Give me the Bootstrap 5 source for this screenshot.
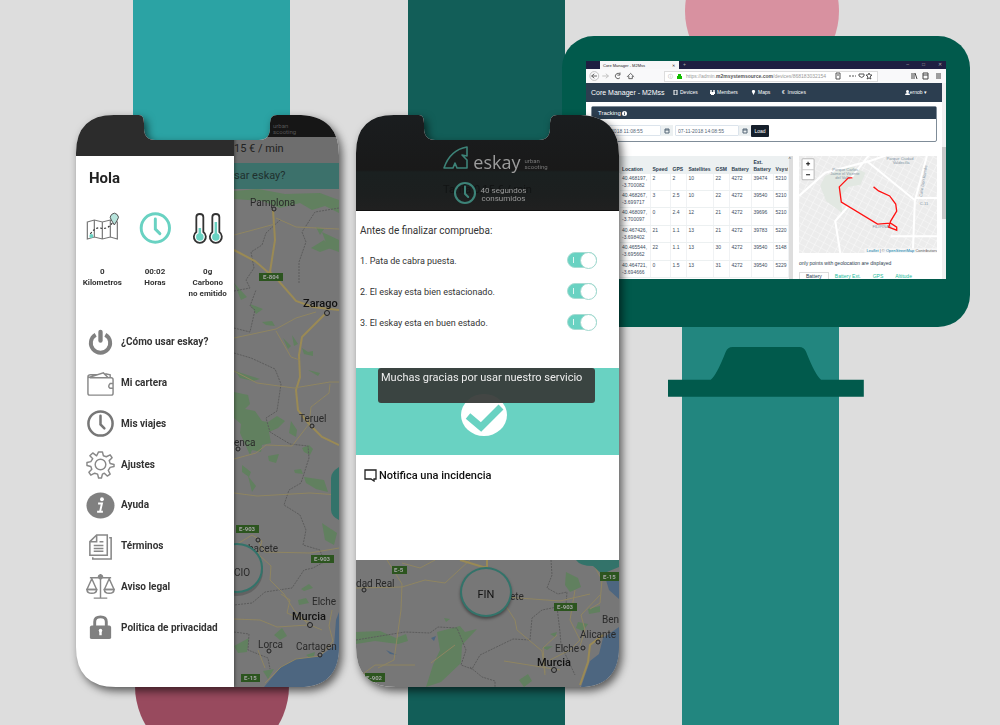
<!DOCTYPE html>
<html lang="es">
<head>
<meta charset="utf-8">
<meta name="viewport" content="width=device-width, initial-scale=1">
<title>eskay urban scooting</title>
<link href="https://cdn.jsdelivr.net/npm/bootstrap@5.3.0/dist/css/bootstrap.min.css" rel="stylesheet">
<style>
:root{--mint:#69d2c2;--deep:#015a4c;--navy:#2c3e50}
body{font-family:Roboto,"Liberation Sans",sans-serif;font-size:10px;line-height:12px;color:#222;background:#ddd}
.stage{min-height:100vh;isolation:isolate}
.backdrop{inset:0;z-index:-1}
.showcase{display:grid;grid-template-columns:76fr 263fr 17fr 206fr 57fr 351fr 30fr;align-items:start;padding:36px 0}
.phone{grid-row:1;margin-top:79px;z-index:2;filter:drop-shadow(3px 4px 4px rgba(0,0,0,.6))}
.phone-a{grid-column:2}
.phone-b{grid-column:4/6}
.monitor{grid-row:1;grid-column:5/7}
.shell{clip-path:url(#phoneShape);min-height:572px}
/* drawer phone */
.drawer{flex:158 1 0;min-width:0}
.behind{flex:105 1 0;min-width:0}
.drawer{box-shadow:1px 0 3px rgba(0,0,0,.4);z-index:1}
.drawer-top{height:41px;background:#2c2c2c}
.hola{font-size:15px;line-height:18px;font-weight:700;margin:13px 0 0 13px}
.stats{height:90px;margin-top:24px}
.stat{width:54px;font-size:8px;line-height:11px;font-weight:700;color:#333}
.stat svg{height:34px;margin-bottom:21px}
.menu{height:326px;margin-top:21px;padding-left:10px}
.menu a{color:#333;font-weight:700;gap:6px}
.menu svg{width:29px;height:29px}
.dim-top{height:22px;background:#161616;color:#555;font-size:6px;line-height:6px;padding:8px 0 0 39px}
.dim-price{height:26px;background:#6e6e6e;color:#222;font-size:11px;padding-top:6px}
.dim-ask{height:26px;background:#3c716b;color:#20302e;font-size:11px;padding-top:7px}
.map{background:#777}
.map text{font-family:Roboto,"Liberation Sans",sans-serif;fill:#292929;font-size:10px}
.map .city{font-weight:500;font-size:11px;fill:#111}
.map .sign rect{fill:#2c551f}
.map .sign text{font-size:6px;font-weight:700;fill:#a5a5a5}
.map .road{fill:none;stroke:#8f8561;stroke-width:1}
.map .road .big{stroke:#9a8a55;stroke-width:2}
.map .edge{fill:none;stroke:#5c5c5c;stroke-dasharray:2 1}
.map .wood{fill:#61805f}
.map .sea{fill:#4d6680}
.map .dot{fill:#777;stroke:#222}
/* finish phone */
.brandbar{height:96px;background:linear-gradient(#1a1d1f,#191919 58%,#1a2020 60%,#1c1f1f 84%,#202020);border-bottom:1px solid #111;color:#9a9a9a;isolation:isolate}
.brandrow{padding-top:31px;height:62px;gap:4px}
.wordmark{font-family:"Open Sans",sans-serif;font-weight:400;font-size:18px;line-height:32px;color:#9c9c9c}
.tag{font-size:6px;line-height:6px;color:#777}
.ghost{top:63px;left:0;right:0;height:32px;color:#121414;font-size:11px;line-height:23px;z-index:-1}
.used{font-size:8px;line-height:8px;gap:4px;height:32px}
.checks{padding:14px 22px 0 4px;height:157px;color:#333}
.check-line{height:31px;font-size:9px}
.form-check-input.tick{width:30px;height:16px;margin:0;border-color:#a8dcd3;float:none;background-image:none;background-color:var(--mint);box-shadow:none}
.toggle{width:30px;height:17px}
.toggle::before{content:"";position:absolute;left:6px;top:5px;width:1px;height:6px;background:#dff6f2}
.toggle::after{content:"";position:absolute;right:0;top:0;width:17px;height:17px;border-radius:50%;background:#fff;border:1px solid #a0d8ce;pointer-events:none}
.done{height:87px;background:var(--mint)}
.note{top:0;left:22px;right:24px;height:35px;background:rgba(55,58,56,.94);color:#eee;border-radius:3px;padding:4px 3px}
.note,.ask{font-size:11px}
.done svg{margin-top:25px}
.report{height:105px;padding:14px 8px}
.report button{font-weight:500;gap:2px;color:#111}
.map-b{height:127px}
.fin{width:52px;height:50px;left:104px;top:7px;border-radius:50%;border:2px solid #33736a;background:#777;color:#111;font-size:11px;padding-top:6px;box-shadow:0 2px 3px rgba(0,0,0,.4)}
/* monitor */
.bezel{background:var(--deep);border-radius:32px;padding:25px 24px 48px}
.screen{height:218px;background:#fff;font-family:"Liberation Sans",sans-serif;font-size:5px;line-height:7px;color:var(--navy)}
.tabs{height:8px;background:#1f1f42;padding-left:14px;color:#aaa}
.tab-on{width:79px;background:#f7f7f8;color:#222;padding:1px 4px 0 3px;font-size:4px}
.winctl{gap:13px}
.urlrow{height:14px;background:#f9f9fa;color:#444;padding:0 4px 0 3px}
.urlbox{width:214px;height:11px;border:1px solid #ddd;background:#fff;margin-left:29px;padding:0 3px;gap:4px;color:#999}
.urlbox b{color:#555}
.page{min-width:0}
.topnav{height:19px;background:var(--navy);color:#fff;padding:0 7px 0 5px}
.topnav a{color:#fff;text-decoration:none}
.topnav .title{font-size:7px;width:82px}
.topnav svg{width:5px;height:5px;margin-right:2px}
.scroller{width:4px;background:#f0f0f0}
.scroller i{display:block;height:72px;margin-top:64px;background:#c8c8c8}
.panel{margin:4px 5px 0;border:1px solid #7f8c98;border-radius:2px;height:36px}
.panel h2{font-size:6px;line-height:12px;background:var(--navy);color:#fff;margin:0;padding-left:6px}
.panel form{padding:6px 0 0 1px}
.panel input{height:11px;border:1px solid #dce4ec;padding:0 3px;font-size:5px;line-height:7px;color:#567;width:68px;border-radius:1px}
.panel .cal{width:12px;height:11px;background:#ecf0f1;border:0;padding:0}
.panel .cal.from{margin-right:2px}
.panel input.until{width:64px;padding:0 2px}
.panel .load{width:18px;height:12px;border:0;background:#151f2b;color:#fff;font-size:5px;line-height:7px;padding:0;border-radius:1px}
.gridrow{margin:14px 5px 0;gap:6px;height:124px;overflow:hidden}
.log{width:202px;padding-left:29px;background:linear-gradient(#ecf0f1 17px,#fff 17px)}
.log table{width:168px;height:122px;table-layout:fixed;margin:0}
.log th,.log td{padding:0 0 0 2px;vertical-align:top;border-right:1px solid #f0f2f4;border-bottom:1px solid #ecf0f1;white-space:nowrap;overflow:hidden;line-height:7px}
.log td{padding-top:1px;color:#3d4d5e;height:17px}
.log th{vertical-align:bottom;height:17px;border-color:#ecf0f1}
.log .bar{width:5px;background:#ddd;color:#555}
.geo{min-width:0}
.geo svg{height:97px}
.geo svg text{font-size:4px;fill:#8495a5}
.geo p{margin:7px 0 5px;font-size:5px;line-height:7px}
.geo .tabrow a{color:#18bc9c;text-decoration:none;padding:1px 6px;line-height:7px}
.geo .tabrow a.on{color:var(--navy);border:1px solid #ddd;border-width:1px 1px 0;padding-top:0;border-radius:1px}
.stand{width:48%;margin:20px auto 0}
</style>
</head>
<body>
<svg width="0" height="0" class="position-absolute" aria-hidden="true"><defs>
<clipPath id="phoneShape" clipPathUnits="objectBoundingBox"><path transform="scale(.00380228 .00174825)" d="M0 38Q0 0 38 0H63Q68 0 68 8V13Q68 25 79 25H183Q194 25 194 13V8Q194 0 201 0H225Q263 2 263 40V532Q263 572 223 572H40Q0 572 0 532Z"/></clipPath>
<symbol id="clock" viewBox="0 0 30 30"><circle cx="15" cy="15" r="12.5" fill="none" stroke="currentColor" stroke-width="2.6"/><path d="M15 7V16L19 20" fill="none" stroke="currentColor" stroke-width="2.6" stroke-linecap="round"/></symbol>
</defs></svg>
<div class="stage position-relative overflow-hidden">
<svg class="backdrop position-absolute w-100 h-100" viewBox="0 0 1000 725" preserveAspectRatio="none" aria-hidden="true">
<path fill="#2ba3a4" d="M133 0H290V400H133z"/><circle cx="212" cy="686" r="77" fill="#984a5e"/>
<path fill="#125e58" d="M408 0H565V725H408z"/><circle cx="762" cy="11" r="77" fill="#d891a0"/><path fill="#22867f" d="M682 200H839V725H682z"/>
</svg>
<main class="showcase">

<section class="phone phone-a"><div class="shell d-flex bg-white">
<div class="drawer">
<div class="drawer-top"></div>
<h1 class="hola">Hola</h1>
<div class="stats d-flex text-center">
<div class="stat"><svg viewBox="0 0 34 34" class="w-100 d-block"><g fill="none" stroke="#777" stroke-width="1.2"><path d="M2 11L9 9L17 11L25 9L32 11V28L25 26L17 28L9 26L2 28ZM9 9V26M17 11V28M25 9V26"/><path d="M5 23Q10 16 15 17Q22 19 27 12" stroke="#333" stroke-dasharray="2 2"/></g><path d="M29 14L26 9A4 4 0 1 1 32 9Z" fill="#b7e4dc" stroke="#555"/><circle cx="6" cy="25" r="2" fill="#69d2c2"/></svg>0<br>Kilometros</div>
<div class="stat"><svg class="w-100 d-block" style="color:#69d2c2"><use href="#clock"/></svg>00:02<br>Horas</div>
<div class="stat text-nowrap"><svg viewBox="0 0 34 34" class="w-100 d-block"><g fill="#fff" stroke="#333" stroke-width="1.8"><path id="th" d="M6 21V6Q6 3 9.500 3Q13 3 13 6V21A6 6 0 1 1 6 21Z"/><use href="#th" x="16"/></g><g stroke="#69d2c2" stroke-width="2.500"><path d="M9.500 17V25M25.500 11V25"/><circle cx="9.500" cy="26" r="2.500" fill="#69d2c2"/><circle cx="25.500" cy="26" r="2.500" fill="#69d2c2"/></g></svg>0g<br>Carbono<br>no emitido</div>
</div>
<nav class="menu d-flex flex-column" id="menu">
<a href="#" class="d-flex align-items-center flex-fill text-decoration-none"><svg viewBox="0 0 30 30"><path d="M10 7A10 10 0 1 0 20 7" fill="none" stroke="#808080" stroke-width="4"/><path d="M15 4V13" stroke="#808080" stroke-width="4.500" stroke-linecap="round"/></svg>¿Cómo usar eskay?</a>
<a href="#" class="d-flex align-items-center flex-fill text-decoration-none"><svg viewBox="0 0 30 30" fill="none" stroke="#888" stroke-width="1.500"><path d="M4 9H26Q28 9 28 11V25Q28 27 26 27H4Q2 27 2 25V8Q2 6 5 6H12M2 9L18 4L23 9M20 5L25 6V9M28 15H25Q22 18 25 20H28"/></svg>Mi cartera</a>
<a href="#" class="d-flex align-items-center flex-fill text-decoration-none"><svg style="color:#777"><use href="#clock"/></svg>Mis viajes</a>
<a href="#" class="d-flex align-items-center flex-fill text-decoration-none"><svg viewBox="0 0 30 30" fill="none" stroke="#888" stroke-width="1.500"><circle cx="15" cy="15" r="5.500"/><path stroke-linejoin="round" d="M13 2H17L18 6L21 7L25 5L27 8L24 11L25 14L29 15V17L25 18L23 21L25 25L22 27L19 24L17 25L16 29H13L12 25L9 24L5 26L3 23L6 20L5 17L1 16V13L5 12L7 9L4 6L7 3L11 6Z"/></svg>Ajustes</a>
<a href="#" class="d-flex align-items-center flex-fill text-decoration-none"><svg viewBox="0 0 30 30"><ellipse cx="15" cy="15" rx="14.500" ry="13.500" fill="#808080"/><circle cx="16.500" cy="8.500" r="2" fill="#fff"/><path d="M12.500 13H16.500L14.500 21.500H17.500M11.500 21.500H14.500" fill="none" stroke="#fff" stroke-width="2"/></svg>Ayuda</a>
<a href="#" class="d-flex align-items-center flex-fill text-decoration-none"><svg viewBox="0 0 30 30" fill="none" stroke="#888" stroke-width="1.600"><path d="M11 3H22V24H4V10ZM11 3V10H4M24 6H26V28H7V26M8 14H18M8 17H18M8 20H18M14 10H18"/></svg>Términos</a>
<a href="#" class="d-flex align-items-center flex-fill text-decoration-none"><svg viewBox="0 0 30 30" fill="none" stroke="#888" stroke-width="1.500"><path d="M15 2V27M8 27H22M4 6H12L15 4L18 6H26M6 7L1 18H11ZM24 7L19 18H29Z"/><path d="M1 18Q1 22 6 22Q11 22 11 18ZM19 18Q19 22 24 22Q29 22 29 18Z"/><circle cx="15" cy="5" r="2" fill="#888"/></svg>Aviso legal</a>
<a href="#" class="d-flex align-items-center flex-fill text-decoration-none"><svg viewBox="0 0 30 30"><path d="M9 14V9Q9 4 15 4Q21 4 21 9V14" fill="none" stroke="#808080" stroke-width="3"/><rect x="4" y="13" width="22" height="14" rx="2" fill="#808080"/><path d="M15 18V23" stroke="#fff" stroke-width="2.500"/><circle cx="15" cy="18" r="1.800" fill="#fff"/></svg>Politica de privacidad</a>
</nav>
</div>
<div class="behind d-flex flex-column text-nowrap overflow-hidden">
<div class="dim-top">urban<br>scooting</div>
<div class="dim-price">15 € / min</div>
<div class="dim-ask">sar eskay?</div>
<div class="map flex-fill position-relative"><svg class="position-absolute w-100 h-100" viewBox="234 189 105 498" preserveAspectRatio="xMinYMin slice">
<g class="wood"><path d="M234 191L258 189L285 194L320 193L339 200V213L325 206L312 210L300 203L280 208L262 201L234 199ZM322 232L339 240V252L328 248ZM311 248L324 240L331 248L320 252ZM316 227L324 229L320 235ZM234 283L247 297L241 300ZM250 304L263 309L256 314ZM262 322L272 321L275 326L266 325ZM283 338L291 346L288 349ZM292 335L298 344L294 346ZM302 348L308 352L313 351V356L304 354ZM308 370L320 373L318 376ZM235 371L260 379L253 381L240 378ZM234 392L248 395L250 404L245 409L255 411L262 421L268 422L277 416L285 421L278 428L269 432L271 443L262 445L261 452L252 450L250 455L240 433L241 424L234 418ZM291 421L297 430L296 437L289 433ZM302 448L309 445L313 449L310 455L304 452ZM268 456L279 454L276 463L269 461ZM242 465L251 472L249 477L242 472ZM294 470L301 469L303 474L295 473ZM304 477L324 480L328 492L316 489L306 483ZM248 476L256 486L252 492ZM322 523L337 533L334 545L325 540ZM301 589L309 584L313 588L304 591ZM298 600L306 598L309 603L299 605ZM274 635L282 628L287 636L280 640ZM234 646L249 638L247 652L238 653ZM306 655L315 652L313 660ZM263 671L274 669L268 679Z"/></g>
<path class="sea" d="M264 687L281 667L296 659L320 656L334 646L336 620L339 612V687Z"/>
<g class="edge"><path d="M234 291L250 288L246 280L254 268L251 252L262 245L266 233L280 220M299 283L299 262L306 242L302 232L315 212L339 208M234 328L250 332L255 310L250 306L256 290M234 353L251 358L275 369L281 384L277 411L266 418L270 432L290 444L308 446L309 458L301 483L289 490L284 505L300 515L306 530L303 545L320 550L324 562L313 568L304 570L292 588L265 592L252 603L234 605M234 632L249 634L248 650L268 658L270 669"/></g>
<g class="road"><path class="big" d="M273 210L275 240L270 272L277 279L296 301L313 307L339 310M234 250L255 261L277 280M325 314L302 337L299 355L300 377L296 390L298 410L309 424L322 437L339 445"/><path d="M234 338L276 329L296 318L316 312M276 331L291 357L300 360M234 371L257 383L294 388L330 382H339M330 384L329 393L311 407L309 425M234 235L253 230L275 224M276 218L296 227L339 229M234 459L256 453L266 445L292 446L309 424M234 493L257 496L310 493L339 495M234 546L252 535L262 541L258 554L271 566L270 580L284 594L294 610L308 624L322 630M258 541L265 552L310 553L339 548M234 619L260 620L277 627L308 625M281 594L290 600L287 613L309 622M258 650L265 668M332 610L329 626L333 641L320 656L296 659L281 667L265 683"/></g>
<path d="M339 467Q331 472 331 478V510Q331 516 339 520Z" fill="#33736a"/>
<g class="dot"><circle cx="274" cy="209" r="2"/><circle cx="327" cy="313" r="2.500"/><circle cx="312" cy="426" r="2"/><circle cx="238" cy="449" r="2"/><circle cx="258" cy="540" r="2"/><circle cx="310" cy="625" r="2.500"/><circle cx="269" cy="651" r="2"/><circle cx="320" cy="655" r="2"/></g>
<text x="250" y="206">Pamplona</text><text x="303" y="307" class="city">Zarago</text><text x="299" y="422">Teruel</text><text x="234" y="446">enca</text><text x="248" y="552">bacete</text><text x="312" y="605">Elche</text><text x="292" y="620" class="city">Murcia</text><text x="258" y="648">Lorca</text><text x="296" y="650">Cartagen</text>
<g class="sign"><rect x="259" y="273" width="24" height="8"/><text x="263" y="279">E-804</text><rect x="236" y="525" width="23" height="8"/><text x="239" y="531">E-903</text><rect x="311" y="555" width="23" height="8"/><text x="314" y="561">E-903</text><rect x="241" y="674" width="19" height="8"/><text x="244" y="680">E-15</text></g>
<ellipse cx="237" cy="571" rx="26" ry="25" fill="#4446"/><ellipse cx="237" cy="568" rx="25" ry="24" fill="#777" stroke="#33736a" stroke-width="2"/><text x="234" y="576">CIO</text>
</svg></div>
</div>
</div></section>

<section class="phone phone-b"><div class="shell bg-white">
<header class="brandbar position-relative">
<div class="ghost position-absolute text-center overflow-hidden" aria-hidden="true">Tarifa 0,15 € / min</div>
<div class="brandrow d-flex justify-content-center ps-3">
<svg width="26" height="24" viewBox="0 0 26 24" fill="none" stroke="#3d8378" stroke-width="1.600"><path d="M1 22Q7 4 24 1V10L19 9L24 14V22H14L12 17L10 22Z" stroke-linejoin="round"/></svg>
<span class="wordmark">eskay</span><span class="tag pt-2 mt-1">urban<br>scooting</span></div>
<div class="used d-flex align-items-center justify-content-center ps-1"><svg width="24" height="24" style="color:#3d8378"><use href="#clock"/></svg><span class="text-center pt-1">40 segundos<br>consumidos</span></div>
</header>
<div class="checks">
<div>Antes de finalizar comprueba:</div>
<div class="pt-1">
<div class="check-line d-flex align-items-center justify-content-between mt-1"><label for="c1">1. Pata de cabra puesta.</label><span class="toggle position-relative form-switch p-0"><input class="form-check-input tick" type="checkbox" id="c1" checked></span></div>
<div class="check-line d-flex align-items-center justify-content-between"><label for="c2">2. El eskay esta bien estacionado.</label><span class="toggle position-relative form-switch p-0"><input class="form-check-input tick" type="checkbox" id="c2" checked></span></div>
<div class="check-line d-flex align-items-center justify-content-between"><label for="c3">3. El eskay esta en buen estado.</label><span class="toggle position-relative form-switch p-0"><input class="form-check-input tick" type="checkbox" id="c3" checked></span></div>
</div></div>
<div class="done position-relative text-center pe-2"><svg width="46" height="44" viewBox="0 0 46 44"><ellipse cx="23" cy="22" rx="23" ry="21" fill="#fff"/><path d="M7 23L20 34L40 14" fill="none" stroke="#69d2c2" stroke-width="7"/></svg>
<div class="note position-absolute text-start text-nowrap" role="status">Muchas gracias por usar nuestro servicio</div></div>
<div class="report"><button type="button" class="btn p-0 border-0 d-flex align-items-center ask lh-1"><svg width="13" height="13" viewBox="0 0 13 13" fill="none" stroke="#222" stroke-width="1.300"><path d="M1 1H12V10H10V12L7 10H1Z"/></svg>Notifica una incidencia</button></div>
<div class="map map-b position-relative"><svg class="position-absolute w-100 h-100" viewBox="356 560 263 127" preserveAspectRatio="xMidYMid slice">
<path class="wood" d="M356 632L380 631L396 638L406 634L408 641L398 644L375 641L356 644ZM437 632L460 626L465 632L477 629L462 645L461 663L441 682L426 687L433 665L440 650ZM566 572L578 578L581 587L570 592L565 585ZM588 609L600 606V612L589 614ZM578 622L588 624L583 631L576 628ZM550 634L557 632L555 637ZM542 647L553 646L547 650ZM519 680L528 674L532 681L524 687ZM444 618L450 619L446 622Z"/><path class="sea" d="M581 687L590 661L599 654L603 638L619 627V687ZM431 638L436 636L434 641ZM386 650L397 655L390 654ZM606 580L619 575V599L609 590Z"/>
<g class="edge"><path d="M356 640L405 632L430 633L438 627L457 628L466 650L461 665L472 669L480 655L513 639L530 640L532 618L542 610L557 607L560 632L561 645L575 675M551 560L552 575L547 588L558 594L567 592L566 605L556 608M470 667L482 677L495 681V687"/></g>
<g class="road"><path d="M356 588L402 587L425 580L445 583L470 560M387 560L402 584L401 610L394 660L378 668M356 679L375 665L415 665M431 663L455 645M402 563L420 568L435 560M500 597L515 620L517 630L542 651L545 675M505 597L560 601L590 594M545 673L543 648L557 635M550 660L570 650L580 640L570 620L575 590M580 646L585 630L581 615L600 595M591 560L602 580L600 603L590 609M504 661L560 670"/><path class="big" d="M460 560L483 567H487V560M603 635L590 645L588 662L580 685"/></g>
<path d="M576 560H619V567L602 574L593 566Q580 566 576 560Z" fill="#33736a"/>
<g class="dot"><circle cx="364" cy="590" r="2"/><circle cx="583" cy="648" r="2"/><circle cx="598" cy="642" r="2"/><circle cx="554" cy="670" r="2.500"/></g>
<text x="356" y="587">dad Real</text><text x="510" y="600">ete</text><text x="602" y="623">Ben</text><text x="580" y="638">Alicante</text><text x="555" y="652">Elche</text><text x="537" y="666" class="city">Murcia</text>
<g class="sign"><rect x="392" y="566" width="15" height="8"/><text x="394" y="572">E-5</text><rect x="600" y="572" width="19" height="9"/><text x="603" y="579">E-15</text><rect x="554" y="603" width="23" height="8"/><text x="557" y="609">E-903</text><rect x="365" y="673" width="20" height="9"/><text x="366" y="680">E-902</text></g>
</svg><button type="button" class="fin position-absolute">FIN</button></div>
</div></section>

<section class="monitor">
<div class="bezel"><div class="screen overflow-hidden text-nowrap">
<div class="tabs d-flex"><div class="tab-on d-flex justify-content-between"><span>Core Manager - M2Mss</span><span>✕</span></div><span class="ms-1 flex-fill">+</span><span class="d-flex winctl pe-1"><span>–</span><span>□</span><span>✕</span></span></div>
<div class="urlrow d-flex align-items-center"><svg width="46" height="12" viewBox="0 0 52 12" class="flex-shrink-0" fill="none" stroke="#555"><circle cx="6" cy="6" r="5" stroke="#bbb"/><path d="M9 6H3L6 3.500M3 6L6 8.500" /><path d="M15 6H22L19 3.500M22 6L19 8.500" stroke="#bbb"/><path d="M35 4A3 3 0 1 0 35 8M35 2V5H32"/><path d="M43 7L47 3L51 7M45 6V9H49V6"/></svg>
<div class="urlbox d-flex align-items-center"><span>ⓘ</span><svg width="5" height="6" viewBox="0 0 5 6"><path d="M0 3H5V6H0ZM1 3V1H4V3" fill="#12bc00"/></svg><span class="flex-fill">https://admin.<b>m2msystemsource.com</b>/devices/868183032154</span><svg width="40" height="8" viewBox="0 0 40 8" fill="none" stroke="#555"><path d="M2 1H6V7H2ZM3 3H5M15 4H17M18 4H20M21 4H22M25 2H30V4Q28 7 25 4ZM35 1L36 3H38L36 5L37 7L35 6L33 7L34 5L32 3H34Z"/></svg></div>
<svg class="ms-auto" width="32" height="8" viewBox="0 0 32 8" fill="none" stroke="#444"><path d="M2 1V7M4 1V7M5 1L7 7M13 1H18V7H13ZM13 3H18M26 2H31M26 4H31M26 6H31"/></svg></div>
<div class="d-flex h-100"><div class="page flex-fill">
<nav class="topnav d-flex align-items-center"><a href="#" class="title">Core Manager - M2Mss</a>
<a href="#" style="width:37px"><svg viewBox="0 0 5 5"><path d="M1 0H4V5H1Z" fill="none" stroke="#fff"/></svg>Devices</a>
<a href="#" style="width:41px"><svg viewBox="0 0 5 5" fill="#fff"><circle cx="1" cy="1" r="1"/><circle cx="4" cy="1" r="1"/><path d="M0 2H5V4H4V5H1V4H0Z"/></svg>Members</a>
<a href="#" style="width:31px"><svg viewBox="0 0 5 5"><path d="M2.500 5L1 2A1.600 1.600 0 1 1 4 2Z" fill="#fff"/></svg>Maps</a>
<a href="#">€&nbsp; Invoices</a>
<a href="#" class="ms-auto me-2"><svg class="me-0" viewBox="0 0 5 5" fill="#fff"><circle cx="2.500" cy="1.500" r="1.500"/><path d="M0 5Q0 3 2.500 3T5 5Z"/></svg>ernob ▾</a></nav>
<section class="panel"><h2>Tracking <svg width="5" height="5" viewBox="0 0 6 6"><circle cx="3" cy="3" r="3" fill="#fff"/><path d="M3 1V2M3 2.500V5" stroke="#2c3e50"/></svg></h2>
<form class="d-flex"><input type="text" value="07-11-2018 11:08:55" aria-label="Desde"><button type="button" class="cal from" aria-label="Calendario"><svg class="d-block mx-auto" width="6" height="6" viewBox="0 0 6 6" fill="none" stroke="#567"><path d="M1 1H5V5H1ZM1 2H5"/></svg></button><input type="text" class="until" value="07-11-2018 14:08:55" aria-label="Hasta"><button type="button" class="cal" aria-label="Calendario"><svg class="d-block mx-auto" width="6" height="6" viewBox="0 0 6 6" fill="none" stroke="#567"><path d="M1 1H5V5H1ZM1 2H5"/></svg></button><button type="button" class="load">Load</button></form></section>
<div class="gridrow d-flex"><div class="log d-flex flex-shrink-0"><table><colgroup><col style="width:30px"><col style="width:20px"><col style="width:16px"><col style="width:27px"><col style="width:16px"><col style="width:22px"><col style="width:22px"><col style="width:15px"></colgroup>
<thead><tr><th>Location</th><th>Speed</th><th>GPS</th><th>Satellites</th><th>GSM</th><th>Battery</th><th>Ext.<br>Battery</th><th>Vsyst</th></tr></thead><tbody>
<tr><td>40.468197,<br>-3.700082</td><td>2</td><td>2</td><td>10</td><td>22</td><td>4272</td><td>39474</td><td>5210</td></tr>
<tr><td>40.468267,<br>-3.699717</td><td>3</td><td>2.5</td><td>10</td><td>22</td><td>4272</td><td>39540</td><td>5210</td></tr>
<tr><td>40.468097,<br>-3.700097</td><td>0</td><td>2.4</td><td>12</td><td>21</td><td>4272</td><td>39696</td><td>5210</td></tr>
<tr><td>40.467426,<br>-3.698402</td><td>21</td><td>1.1</td><td>13</td><td>21</td><td>4272</td><td>39783</td><td>5220</td></tr>
<tr><td>40.465544,<br>-3.695662</td><td>22</td><td>1.1</td><td>13</td><td>30</td><td>4272</td><td>39540</td><td>5148</td></tr>
<tr><td>40.464721,<br>-3.694666</td><td>0</td><td>1.5</td><td>13</td><td>31</td><td>4272</td><td>39540</td><td>5229</td></tr>
</tbody></table><div class="bar">^</div></div>
<div class="geo flex-fill"><svg class="d-block w-100" viewBox="799 155 137 97" preserveAspectRatio="xMidYMid slice"><defs><pattern id="blocks" width="7" height="6" patternUnits="userSpaceOnUse" patternTransform="rotate(28)"><path d="M0 0H7M0 0V6" stroke="#fafafa"/></pattern></defs><path fill="#ececec" d="M799 155H936V252H799z"/><path fill="url(#blocks)" d="M799 155H936V252H799z"/><path fill="#e2e8e2" d="M825 175L850 165L865 172L860 184L848 186L840 196L842 212L826 200L820 185Z"/><path d="M799 195L825 172L870 160L885 155M866 160L915 200M868 155L850 178M926 155L914 200L912 252M840 252L835 220L848 205M890 235H936M915 197H936" fill="none" stroke="#fff" stroke-width="2"/>
<text x="886" y="159">Parque Ciudad</text><text x="892" y="163">Valdecilla</text><text x="832" y="170">Parque Carlos</text><text x="830" y="174">Jaime el Vicente</text><text x="835" y="178">del Valle</text><text x="872" y="227">FILIPINAS</text><text x="919" y="204">C-11</text><text transform="translate(921 196) rotate(-80)">Calle Don Ramón</text>
<path d="M852 177H848L839 186L841 201L877 223L890 222L896 226V229L888 226L890 220L896 210L895 203L889 195L878 190L873 186" fill="none" stroke="#f11" stroke-width="1.300"/><rect x="802" y="158" width="12" height="21" rx="1" fill="#fff" stroke="#bbb"/><path d="M802 169H814" stroke="#ccc"/><path d="M806 163H810M808 161V165M806 174H810" stroke="#111"/>
<path fill="#f7f7f7" d="M864 247H936V252H864z"/><text x="866" y="251" style="fill:#555"><tspan fill="#0078a8">Leaflet</tspan> | © <tspan fill="#0078a8">OpenStreetMap</tspan> Contributors</text></svg>
<p>only points with geolocation are displayed</p><div class="tabrow d-flex"><a href="#" class="on">Battery</a><a href="#">Battery Ext.</a><a href="#">GPS</a><a href="#">Altitude</a></div></div></div>
</div><div class="scroller"><i></i></div></div>
</div></div>
<svg class="stand d-block" viewBox="0 0 197 50" aria-hidden="true"><path fill="#015a4c" d="M0 33H43Q49 28 58 5Q60 0 65 0H132Q137 0 139 5Q148 28 154 33H197V50H0Z"/></svg>
</section>
</main>
</div>
<script src="https://cdn.jsdelivr.net/npm/bootstrap@5.3.0/dist/js/bootstrap.bundle.min.js"></script>
</body>
</html>
